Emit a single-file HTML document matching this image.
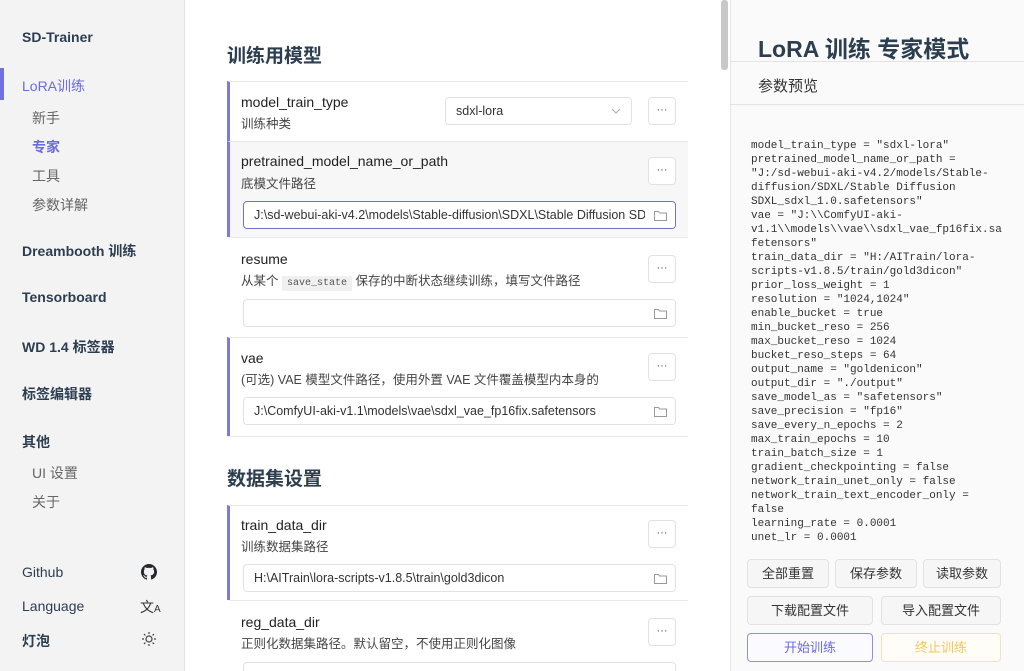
<!DOCTYPE html>
<html><head><meta charset="utf-8"><style>
*{box-sizing:border-box;margin:0;padding:0}
html,body{width:1024px;height:671px;overflow:hidden}
body{position:relative;font-family:"Liberation Sans","Noto Sans CJK SC",sans-serif;color:#2c3e50;background:#fff}
.a{position:absolute;white-space:nowrap}
#side{position:absolute;left:0;top:0;width:185px;height:671px;background:#f3f3f4;border-right:1px solid #e2e2e3}
.sb{font-size:14px;font-weight:bold;color:#2c3e50;left:22px}
.ss{font-size:14px;color:#666;left:32px}
.item{position:absolute;left:227px;width:461px;border-top:1px solid #e8e8e8}
.item.b{border-left:3px solid #7b7bd8}
.nm{position:absolute;left:11px;font-size:14px;line-height:18px;color:#222;white-space:nowrap}
.ds{position:absolute;left:11px;font-size:12.5px;line-height:18px;color:#444;white-space:nowrap}
.dots{position:absolute;left:418px;width:28px;height:28px;border:1px solid #e2e2e2;border-radius:4px;background:#fff;font-size:11px;text-align:center;line-height:24px;color:#555}
.inp{position:absolute;left:13px;width:433px;height:28px;border:1px solid #e2e2e2;border-radius:4px;background:#fff;font-size:12.5px;line-height:26px;padding-left:10px;color:#333;overflow:hidden;white-space:nowrap}
.fold{position:absolute;right:0;top:0;width:30px;height:26px;background:#fff}
.fold svg{position:absolute;left:9px;top:8px}
h2{position:absolute;left:227px;font-size:19px;font-weight:bold;color:#2c3e50}
pre{position:absolute;left:751px;top:139px;font-family:"Liberation Mono",monospace;font-size:11px;line-height:14px;color:#333;height:404px;overflow:hidden}
.btn{position:absolute;height:29px;border:1px solid #e2e2e2;border-radius:4px;background:#f6f6f6;font-size:13px;text-align:center;line-height:27px;color:#333}
</style></head><body>
<div id="side">
<div class="a sb" style="top:29px">SD-Trainer</div>
<div class="a" style="left:0;top:68px;width:4px;height:32px;background:#7070e0"></div>
<div class="a sb" style="top:76px;color:#6b6be0;font-weight:normal">LoRA训练</div>
<div class="a ss" style="top:108px">新手</div>
<div class="a ss" style="top:137px;color:#6b6be0;font-weight:bold">专家</div>
<div class="a ss" style="top:166px">工具</div>
<div class="a ss" style="top:195px">参数详解</div>
<div class="a sb" style="top:241px">Dreambooth 训练</div>
<div class="a sb" style="top:289px">Tensorboard</div>
<div class="a sb" style="top:337px">WD 1.4 标签器</div>
<div class="a sb" style="top:384px">标签编辑器</div>
<div class="a sb" style="top:432px">其他</div>
<div class="a ss" style="top:463px">UI 设置</div>
<div class="a ss" style="top:492px">关于</div>
<div class="a sb" style="top:564px;font-weight:normal">Github</div>
<div class="a sb" style="top:598px;font-weight:normal">Language</div>
<div class="a sb" style="top:631px">灯泡</div>
<svg class="a" style="left:141px;top:564px" width="16" height="16" viewBox="0 0 16 16"><path fill="#24292f" d="M8 0C3.6 0 0 3.6 0 8c0 3.5 2.3 6.5 5.5 7.6.4.1.5-.2.5-.4v-1.4c-2.200.5-2.700-1-2.700-1-.4-.9-.9-1.2-.9-1.2-.7-.5.1-.5.1-.5.8.1 1.2.8 1.2.8.7 1.2 1.9.9 2.3.7.1-.5.3-.9.5-1.1-1.8-.2-3.6-.9-3.6-4 0-.9.3-1.6.8-2.1-.1-.2-.4-1 .1-2.1 0 0 .7-.2 2.2.8.6-.2 1.3-.3 2-.3s1.4.1 2 .3c1.5-1 2.2-.8 2.2-.8.4 1.1.2 1.9.1 2.1.5.6.8 1.3.8 2.1 0 3.1-1.9 3.7-3.6 3.9.3.3.5.8.5 1.5v2.2c0 .2.1.5.6.4C13.7 14.5 16 11.5 16 8c0-4.4-3.6-8-8-8z"/></svg>
<div class="a" style="left:140px;top:597px;font-size:14px;color:#333">文<span style="font-size:10px">A</span></div>
<svg class="a" style="left:141px;top:631px" width="16" height="16" viewBox="0 0 16 16" stroke="#444" fill="none" stroke-width="1.2"><circle cx="8" cy="8" r="3"/><path d="M8 1v2M8 13v2M1 8h2M13 8h2M3 3l1.4 1.4M11.6 11.6L13 13M3 13l1.4-1.4M11.6 4.4L13 3"/></svg>
</div>
<div class="a" style="left:721px;top:0;width:7px;height:70px;background:#c8c8c8;border-radius:3px"></div>

<h2 style="top:41px">训练用模型</h2>
<div class="item b" style="top:81px;height:60px">
<div class="nm" style="top:11px">model_train_type</div>
<div class="ds" style="top:33px">训练种类</div>
<div style="position:absolute;left:215px;top:15px;width:187px;height:28px;border:1px solid #e2e2e2;border-radius:4px;font-size:12.5px;line-height:26px;padding-left:10px;color:#333">sdxl-lora<svg style="position:absolute;right:10px;top:10px" width="10" height="6" viewBox="0 0 10 6"><path d="M1 1l4 4 4-4" stroke="#aaa" fill="none"/></svg></div>
<div class="dots" style="top:15px">···</div>
</div>
<div class="item b" style="top:141px;height:96px;background:#f7f7f8">
<div class="nm" style="top:10px">pretrained_model_name_or_path</div>
<div class="ds" style="top:33px">底模文件路径</div>
<div class="dots" style="top:15px">···</div>
<div class="inp" style="top:59px;border-color:#7070d8">J:\sd-webui-aki-v4.2\models\Stable-diffusion\SDXL\Stable Diffusion SDXL<div class="fold"><svg width="13" height="11" viewBox="0 0 13 11"><path d="M.5 1.5h4l1 1.5h7v7.5h-12z" fill="none" stroke="#999"/></svg></div></div>
</div>
<div class="item" style="top:237px;height:100px;border-left:3px solid transparent">
<div class="nm" style="top:12px">resume</div>
<div class="ds" style="top:34px">从某个 <span style="font-family:'Liberation Mono',monospace;font-size:10px;background:#f0f0f0;padding:2px 5px;color:#555">save_state</span> 保存的中断状态继续训练，填写文件路径</div>
<div class="dots" style="top:17px">···</div>
<div class="inp" style="top:61px"><div class="fold"><svg width="13" height="11" viewBox="0 0 13 11"><path d="M.5 1.5h4l1 1.5h7v7.5h-12z" fill="none" stroke="#999"/></svg></div></div>
</div>
<div class="item b" style="top:337px;height:99px">
<div class="nm" style="top:11px">vae</div>
<div class="ds" style="top:33px">(可选) VAE 模型文件路径，使用外置 VAE 文件覆盖模型内本身的</div>
<div class="dots" style="top:15px">···</div>
<div class="inp" style="top:59px">J:\ComfyUI-aki-v1.1\models\vae\sdxl_vae_fp16fix.safetensors<div class="fold"><svg width="13" height="11" viewBox="0 0 13 11"><path d="M.5 1.5h4l1 1.5h7v7.5h-12z" fill="none" stroke="#999"/></svg></div></div>
</div>
<div class="a" style="left:227px;top:436px;width:461px;border-top:1px solid #e8e8e8"></div>
<h2 style="top:464px">数据集设置</h2>
<div class="item b" style="top:505px;height:95px">
<div class="nm" style="top:10px">train_data_dir</div>
<div class="ds" style="top:32px">训练数据集路径</div>
<div class="dots" style="top:14px">···</div>
<div class="inp" style="top:58px">H:\AITrain\lora-scripts-v1.8.5\train\gold3dicon<div class="fold"><svg width="13" height="11" viewBox="0 0 13 11"><path d="M.5 1.5h4l1 1.5h7v7.5h-12z" fill="none" stroke="#999"/></svg></div></div>
</div>
<div class="item" style="top:600px;height:71px;border-left:3px solid transparent">
<div class="nm" style="top:12px">reg_data_dir</div>
<div class="ds" style="top:34px">正则化数据集路径。默认留空，不使用正则化图像</div>
<div class="dots" style="top:17px">···</div>
<div class="inp" style="top:61px"></div>
</div>

<div class="a" style="left:730px;top:0;width:294px;height:671px;background:#fafafa;border-left:1px solid #e6e6e6"></div>
<div class="a" style="left:758px;top:30px;font-size:23px;font-weight:bold;color:#2c3e50">LoRA 训练 专家模式</div>
<div class="a" style="left:731px;top:61px;width:293px;border-top:1px solid #e4e4e4"></div>
<div class="a" style="left:758px;top:75px;font-size:15px;color:#333">参数预览</div>
<div class="a" style="left:731px;top:104px;width:293px;border-top:1px solid #e4e4e4"></div>
<pre>model_train_type = "sdxl-lora"
pretrained_model_name_or_path =
"J:/sd-webui-aki-v4.2/models/Stable-
diffusion/SDXL/Stable Diffusion
SDXL_sdxl_1.0.safetensors"
vae = "J:\\ComfyUI-aki-
v1.1\\models\\vae\\sdxl_vae_fp16fix.sa
fetensors"
train_data_dir = "H:/AITrain/lora-
scripts-v1.8.5/train/gold3dicon"
prior_loss_weight = 1
resolution = "1024,1024"
enable_bucket = true
min_bucket_reso = 256
max_bucket_reso = 1024
bucket_reso_steps = 64
output_name = "goldenicon"
output_dir = "./output"
save_model_as = "safetensors"
save_precision = "fp16"
save_every_n_epochs = 2
max_train_epochs = 10
train_batch_size = 1
gradient_checkpointing = false
network_train_unet_only = false
network_train_text_encoder_only =
false
learning_rate = 0.0001
unet_lr = 0.0001</pre>
<div class="btn" style="left:747px;top:559px;width:82px">全部重置</div>
<div class="btn" style="left:835px;top:559px;width:82px">保存参数</div>
<div class="btn" style="left:923px;top:559px;width:78px">读取参数</div>
<div class="btn" style="left:747px;top:596px;width:126px">下载配置文件</div>
<div class="btn" style="left:881px;top:596px;width:120px">导入配置文件</div>
<div class="btn" style="left:747px;top:633px;width:126px;border-color:#8f8fe8;color:#6b6be0;background:#fafaff">开始训练</div>
<div class="btn" style="left:881px;top:633px;width:120px;border-color:#f5e2b8;color:#f2c85a;background:#fffdf8">终止训练</div>
</body></html>
